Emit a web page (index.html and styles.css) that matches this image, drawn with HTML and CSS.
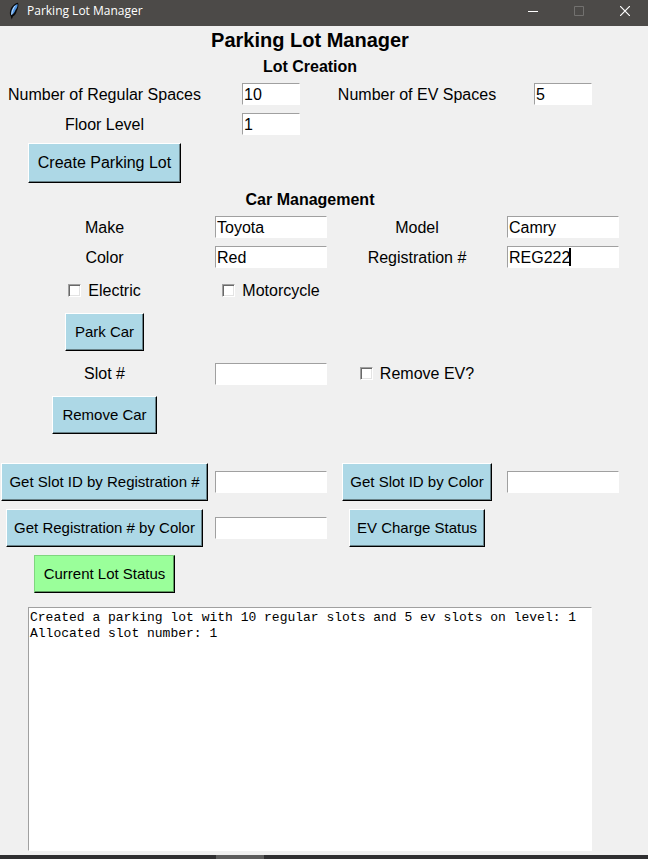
FILE: index.html
```html
<!DOCTYPE html>
<html lang="en">
<head>
<meta charset="utf-8">
<title>Parking Lot Manager</title>
<link rel="stylesheet" href="styles.css">
</head>
<body>
<header class="titlebar">
  <svg class="feather" viewBox="0 0 12 18" aria-hidden="true">
    <path d="M10 0.800C6.800 1.300 3.500 4.300 2.400 8C1.600 10.500 1.700 12.500 2.600 13.800L3.800 17.500L4.900 14.500C7 13.200 8.200 11.500 8.700 9C10 7 11 3 10 0.800Z" fill="#0a0a0a"/>
    <path d="M9.400 2C6.800 2.800 4.200 5.800 3.300 9L3.100 13.200C5.500 12.200 6.800 10.200 7.500 8C9 6 9.900 4 9.400 2Z" fill="#4f93e0"/>
    <path d="M7.200 3.800C5.500 5.800 4.200 8.800 3.600 12.500" fill="none" stroke="#c3ddf6"/>
  </svg>
  <span class="caption">Parking Lot Manager</span>
  <div class="window-buttons">
    <button class="window-button" type="button" aria-label="Minimize"><svg viewBox="0 0 10 10"><path d="M0 5.500H10" stroke="#fff"/></svg></button>
    <button class="window-button" type="button" aria-label="Maximize" disabled><svg viewBox="0 0 10 10"><path d="M.5.5H9.500V9.500H.5Z" fill="none" stroke="#72716f"/></svg></button>
    <button class="window-button" type="button" aria-label="Close"><svg viewBox="0 0 10 10"><path d="M0 0L10 10M10 0L0 10" stroke="#fff" stroke-width="1.200"/></svg></button>
  </div>
</header>

<main class="app">
  <h1 class="title">Parking Lot Manager</h1>

  <h2 class="section">Lot Creation</h2>
  <form class="form">
    <div class="row">
      <label for="regular">Number of Regular Spaces</label>
      <input class="entry entry-small" id="regular" type="text" value="10">
      <label for="ev">Number of EV Spaces</label>
      <input class="entry entry-small" id="ev" type="text" value="5">
    </div>
    <div class="row">
      <label for="floor">Floor Level</label>
      <input class="entry entry-small" id="floor" type="text" value="1">
    </div>
    <div class="row row-create">
      <button class="button button-large" type="button">Create Parking Lot</button>
    </div>
  </form>

  <h2 class="section">Car Management</h2>
  <form class="form">
    <div class="row">
      <label for="make">Make</label>
      <input class="entry" id="make" type="text" value="Toyota">
      <label for="model">Model</label>
      <input class="entry" id="model" type="text" value="Camry">
    </div>
    <div class="row">
      <label for="color">Color</label>
      <input class="entry" id="color" type="text" value="Red">
      <label for="registration">Registration #</label>
      <div class="focused">
        <input class="entry" id="registration" type="text" value="REG222">
        <span class="caret"></span>
      </div>
    </div>
    <div class="row row-check">
      <label class="check"><input type="checkbox">Electric</label>
      <label class="check"><input type="checkbox">Motorcycle</label>
    </div>
    <div class="row row-button">
      <button class="button" type="button">Park Car</button>
    </div>
    <div class="row row-check">
      <label for="slot">Slot #</label>
      <input class="entry" id="slot" type="text">
      <label class="check"><input type="checkbox">Remove EV?</label>
    </div>
    <div class="row row-button">
      <button class="button" type="button">Remove Car</button>
    </div>
  </form>

  <form class="form queries">
    <div class="row row-button">
      <button class="button" type="button">Get Slot ID by Registration #</button>
      <input class="entry" type="text" aria-label="Registration number">
      <button class="button" type="button">Get Slot ID by Color</button>
      <input class="entry" type="text" aria-label="Color for slot">
    </div>
    <div class="row row-button">
      <button class="button" type="button">Get Registration # by Color</button>
      <input class="entry" type="text" aria-label="Color for registration">
      <button class="button" type="button">EV Charge Status</button>
    </div>
    <div class="row row-button">
      <button class="button button-status" type="button">Current Lot Status</button>
    </div>
  </form>

  <textarea class="output" rows="15" spellcheck="false" aria-label="Output">Created a parking lot with 10 regular slots and 5 ev slots on level: 1
Allocated slot number: 1</textarea>
</main>

<footer class="taskbar"><span class="task"></span></footer>
</body>
</html>
```

FILE: styles.css
```css
* {
  box-sizing: border-box;
}

body {
  margin: 0;
  min-height: 100vh;
  display: flex;
  flex-direction: column;
  background: #f0f0f0;
  color: #000;
  font: 16px/20px "Liberation Sans", Arial, sans-serif;
}

.titlebar {
  display: flex;
  align-items: center;
  height: 26px;
  padding: 0 0 4px 8px;
  background: #4c4a48;
  color: #fff;
}

.feather {
  width: 12px;
  height: 18px;
  margin-right: 7px;
}

.caption {
  font: 12px/16px "Open Sans", "Noto Sans", sans-serif;
}

.window-buttons {
  display: flex;
  margin-left: auto;
}

.window-button {
  display: flex;
  align-items: center;
  justify-content: center;
  width: 46px;
  height: 20px;
  padding: 0;
  border: 0;
  background: none;
}

.window-button svg {
  width: 10px;
  height: 10px;
}

.app {
  flex: 1;
  display: flex;
  flex-direction: column;
  padding-right: 28px;
}

.title,
.section {
  margin: 0;
  text-align: center;
  font-weight: bold;
}

.title {
  font-size: 20px;
  line-height: 28px;
}

.section {
  font-size: 16px;
  line-height: 25px;
}

.form {
  margin-right: -5px;
}

.row {
  display: grid;
  grid-template-columns: minmax(0, 209fr) minmax(0, 124fr) minmax(0, 168fr) minmax(0, 124fr);
  align-items: center;
  justify-items: center;
  min-height: 30px;
}

.row > label {
  padding-top: 1px;
  white-space: nowrap;
}

.row-create {
  min-height: 48px;
}

.row-check {
  min-height: 37px;
}

.row-button {
  min-height: 46px;
}

.queries {
  margin-top: 21px;
}

.entry {
  width: 112px;
  height: 22px;
  padding: 1px 1px 0;
  border: 1px solid #fff;
  border-top-color: #a0a0a0;
  border-left-color: #a0a0a0;
  border-radius: 0;
  background: #fff;
  color: #000;
  font: inherit;
  outline: 0;
}

.entry-small {
  width: 58px;
}

.focused {
  position: relative;
  display: flex;
}

.caret {
  position: absolute;
  top: 2px;
  left: 62px;
  width: 2px;
  height: 18px;
  background: #000;
}

.row > .check {
  display: flex;
  align-items: center;
  gap: 7px;
  padding-top: 0;
}

.check input {
  appearance: none;
  width: 13px;
  height: 13px;
  margin: 0;
  border: 1px solid #fff;
  border-top-color: #a0a0a0;
  border-left-color: #a0a0a0;
  background: #fff;
  box-shadow: inset 1px 1px #696969, inset -1px -1px #e3e3e3;
}

.button {
  height: 38px;
  padding: 0 9px;
  border: 1px solid #000;
  border-top-color: #fff;
  border-left-color: #fff;
  border-radius: 0;
  background: #add8e6;
  box-shadow: inset -1px -1px #688289;
  color: #000;
  font: 15px/20px "Liberation Sans", Arial, sans-serif;
  white-space: nowrap;
}

.queries .button {
  padding: 0 7px;
}

.button-large {
  height: 40px;
  font-size: 16px;
}

.queries .button-status {
  padding: 0 9px;
  border-top-color: #7fd67f;
  border-left-color: #7fd67f;
  background: #9aff9a;
  box-shadow: inset -1px -1px #5c995c;
}

.output {
  display: block;
  margin: 10px 28px 4px;
  padding: 2px 1px 0;
  border: 1px solid #fff;
  border-top-color: #a0a0a0;
  border-left-color: #a0a0a0;
  border-radius: 0;
  background: #fff;
  color: #000;
  font: 13px/16px "Liberation Mono", "Courier New", monospace;
  outline: 0;
  overflow: auto;
  resize: none;
}

.taskbar {
  display: grid;
  grid-template-columns: 216fr 48fr 384fr;
  height: 4px;
  background: #2f2f31;
}

.task {
  grid-column: 2;
  background: #5c5c5c;
}
```
